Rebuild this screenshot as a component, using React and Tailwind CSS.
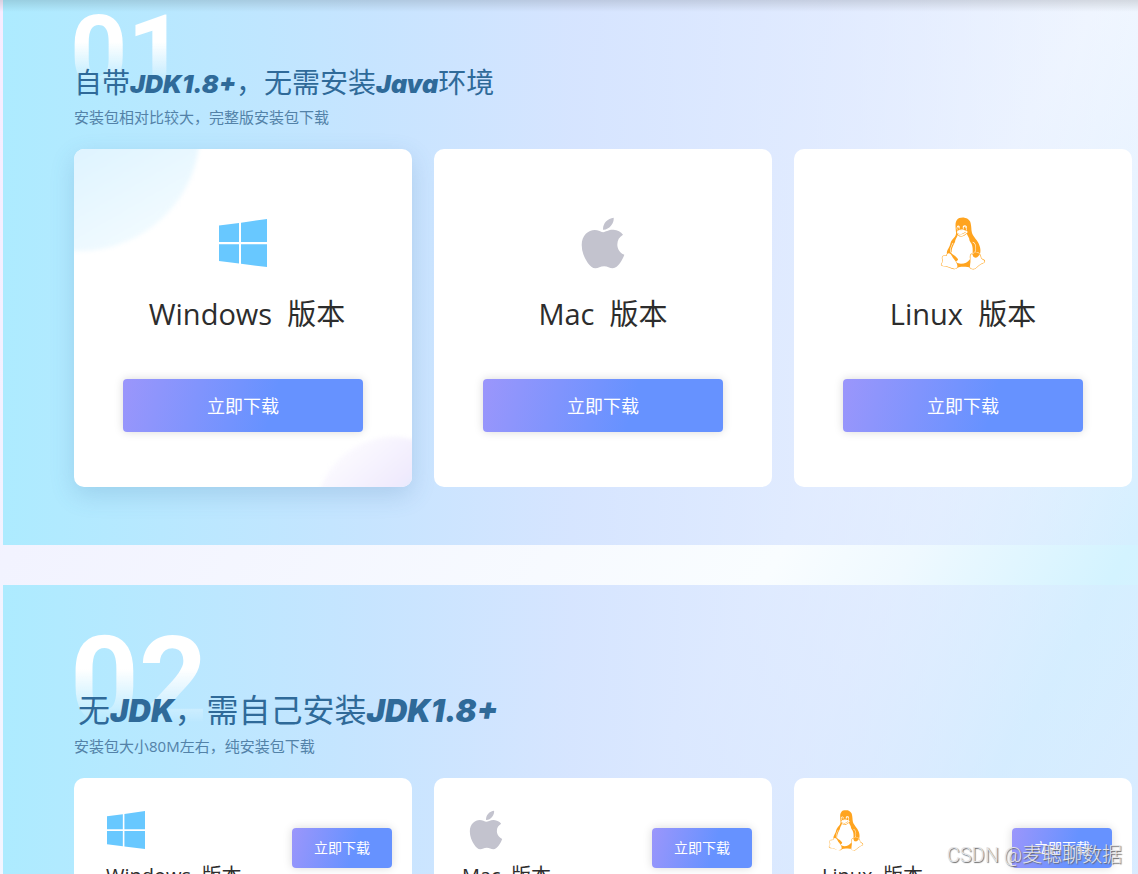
import { FaApple } from 'react-icons/fa'
import { DiLinux } from 'react-icons/di'

function WindowsLogo({ className }) {
  return (
    <svg viewBox="0 0 48 48" fill="currentColor" className={className} aria-hidden="true">
      <path d="M0 6.500 20 4V23H0zM22 3.700 48 0V23H22zM0 25.200H20V44.500L0 42zM22 25.200H48V48L22 44.800z" />
    </svg>
  )
}

const platforms = [
  { name: 'Windows', Icon: WindowsLogo, color: 'text-[#68c8ff]', large: 'size-12', small: 'size-[38px]', largePad: 'pl-2', smallPad: 'pl-1' },
  { name: 'Mac', Icon: FaApple, color: 'text-[#c3c3ce]', large: 'size-[58px]', small: 'size-11', largePad: '', smallPad: '' },
  { name: 'Linux', Icon: DiLinux, color: 'text-[#ffa41f]', large: 'size-[54px]', small: 'size-[42px]', largePad: '', smallPad: '' },
]

const buttonBase = 'rounded bg-linear-[105deg,#9b96fb,#6692ff_62%] text-white shadow-[0_0_10px_rgba(0,0,0,0.15)] cursor-pointer'

function SectionHead({ number, numberClass, title, titleClass, note }) {
  return (
    <header>
      <div className={`-ml-1 w-fit bg-linear-to-b from-white from-40% to-white/0 to-85% bg-clip-text font-['Roboto',sans-serif] font-bold leading-none text-transparent ${numberClass}`}>
        {number}
      </div>
      <h2 className={`relative text-[#2f6a99] ${titleClass}`}>{title}</h2>
      <p className="mt-[3px] text-[15px] leading-5 text-[#5382a8]">{note}</p>
    </header>
  )
}

function Latin({ size, children }) {
  return <span className={`font-['Inter',sans-serif] font-black italic ${size}`}>{children}</span>
}

function LargeCard({ platform, active }) {
  const { name, Icon, color, large, largePad } = platform
  return (
    <article className={`relative flex flex-col items-center overflow-hidden rounded-[10px] bg-white pt-16 pb-[55px] ${active ? 'shadow-[0_8px_24px_rgba(60,110,160,0.2)]' : ''}`}>
      {active && (
        <>
          <div className="absolute -top-[138px] -left-[114px] size-60 rounded-full bg-linear-[150deg,#d9f2ff_45%,#f8fdff] blur-[2px]" />
          <div className="absolute -right-[58px] -bottom-[104px] size-[154px] rounded-full bg-linear-[140deg,#fdfcff_10%,#f0ebfd_40%,#d5e8fb_60%] blur-[2px]" />
        </>
      )}
      <div className={`relative flex h-[60px] items-center ${color}`}>
        <Icon className={large} />
      </div>
      <h3 className={`relative mt-5 text-[29px] leading-[42px] whitespace-pre text-[#2d2d2d] ${largePad}`}>{name}{'  '}版本</h3>
      <button type="button" className={`relative mt-11 h-[53px] w-60 text-lg ${buttonBase}`}>立即下载</button>
    </article>
  )
}

function SmallCard({ platform }) {
  const { name, Icon, color, small, smallPad } = platform
  return (
    <article className="flex items-center justify-between rounded-[10px] bg-white py-7 pr-5 pl-7">
      <div>
        <div className={`flex size-12 items-center justify-center ${color}`}>
          <Icon className={small} />
        </div>
        <h3 className={`mt-2 text-xl leading-7 whitespace-pre text-[#2d2d2d] ${smallPad}`}>{name}{'  '}版本</h3>
      </div>
      <button type="button" className={`h-10 w-25 text-sm ${buttonBase}`}>立即下载</button>
    </article>
  )
}

const sectionBg = 'bg-linear-[90deg,#adebff,#c3e3ffed_32%,#d0e1ffd8_50%,#d6e3ffa0_75%,#dbe4ff40]'

export default function App() {
  return (
    <div className="relative min-h-screen overflow-hidden bg-linear-[120deg,#f7ecff,#f2f3ff_20%,#f9fdff_67%,#eff9ff_75%,#d3f3ff_88%,#d9eeff] bg-fixed pl-[3px] font-['Open_Sans','Noto_Sans_CJK_SC',sans-serif]">
      <div className="absolute inset-x-0 top-0 h-3 bg-linear-to-b from-black/12 to-transparent" />

      <section className={`pt-0.5 pr-1.5 pb-[58px] pl-[71px] ${sectionBg}`}>
        <SectionHead
          number="01"
          numberClass="text-[100px]"
          title={<>自带<Latin size="text-[25px]">JDK1.8+</Latin>，无需安装<Latin size="text-[25px]">Java</Latin>环境</>}
          titleClass="-mt-10 text-[28px] leading-10"
          note="安装包相对比较大，完整版安装包下载"
        />
        <div className="mt-[22px] grid grid-cols-3 gap-[22px]">
          {platforms.map((p, i) => <LargeCard key={p.name} platform={p} active={i === 0} />)}
        </div>
      </section>

      <section className={`mt-10 pt-9 pr-1.5 pb-16 pl-[71px] ${sectionBg}`}>
        <SectionHead
          number="02"
          numberClass="text-[120px]"
          title={<>无<Latin size="text-[31px]">JDK</Latin>，需自己安装<Latin size="text-[31px]">JDK1.8+</Latin></>}
          titleClass="-mt-[53px] pl-1 text-[32px] leading-11"
          note="安装包大小80M左右，纯安装包下载"
        />
        <div className="mt-[22px] grid grid-cols-3 gap-[22px]">
          {platforms.map((p) => <SmallCard key={p.name} platform={p} />)}
        </div>
      </section>

      <div className="absolute top-[841px] right-4 font-['Roboto','Noto_Sans_CJK_SC',sans-serif] text-xl leading-7 font-light text-[#e4e4e6] [text-shadow:1px_1px_1px_#666]">
        CSDN @麦聪聊数据
      </div>
    </div>
  )
}
